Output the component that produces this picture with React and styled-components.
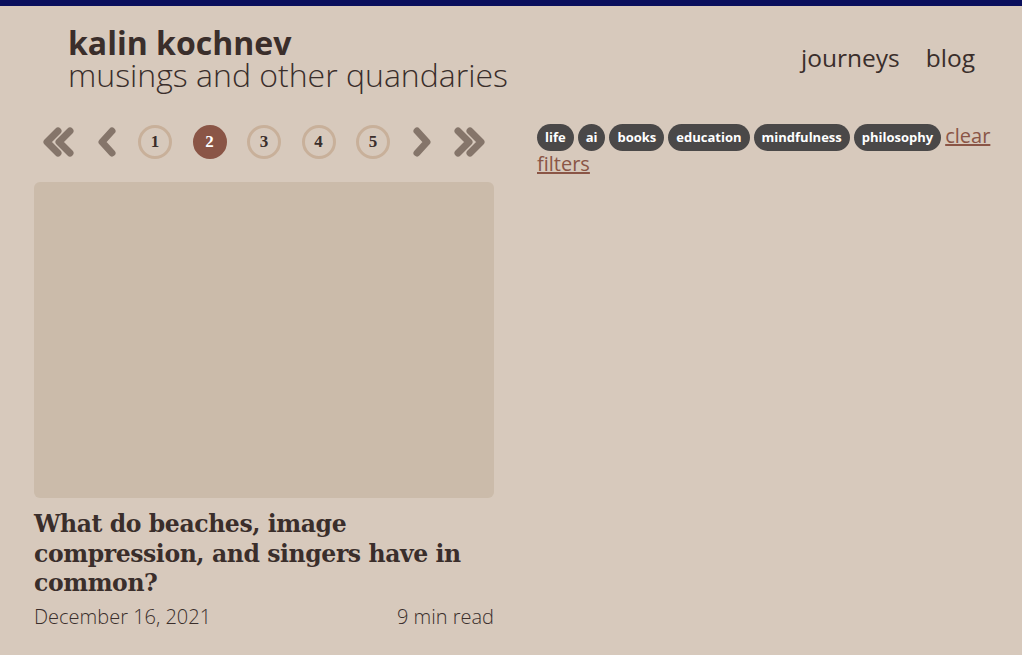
import React from 'react'
import styled, { createGlobalStyle } from 'styled-components'

const GlobalStyle = createGlobalStyle`
  html, body {
    margin: 0;
    padding: 0;
    background: #d7c9bc;
    font-family: "Open Sans", "Liberation Sans", sans-serif;
    color: #3a2e2b;
  }
`

const tags = ['life', 'ai', 'books', 'education', 'mindfulness', 'philosophy']
const pages = [1, 2, 3, 4, 5]

const Chevron = ({ double, flip }) => (
  <svg width={double ? 34 : 22} height="32" viewBox={double ? '0 0 34 32' : '0 0 22 32'}
    style={{ transform: flip ? 'scaleX(-1)' : 'none' }}>
    <g fill="none" stroke="#85756a" strokeWidth="7" strokeLinecap="round" strokeLinejoin="round">
      {double ? (
        <>
          <path d="M17 5 L6 16 L17 27" />
          <path d="M29 5 L18 16 L29 27" />
        </>
      ) : (
        <path d="M16 5 L6 16 L16 27" />
      )}
    </g>
  </svg>
)

export default function App() {
  return (
    <>
      <GlobalStyle />
      <TopBar />
      <Header>
        <Brand>
          <Name>kalin kochnev</Name>
          <Tagline>musings and other quandaries</Tagline>
        </Brand>
        <Nav>
          <NavLink>journeys</NavLink>
          <NavLink>blog</NavLink>
        </Nav>
      </Header>
      <Main>
        <LeftCol>
          <Pager>
            <Arrow><Chevron double /></Arrow>
            <Arrow><Chevron /></Arrow>
            {pages.map((p) => (
              <PageDot key={p} active={p === 2}>{p}</PageDot>
            ))}
            <Arrow><Chevron flip /></Arrow>
            <Arrow><Chevron double flip /></Arrow>
          </Pager>
          <Card>
            <Thumb />
            <Title>What do beaches, image compression, and singers have in common?</Title>
            <Meta>
              <span>December 16, 2021</span>
              <span>9 min read</span>
            </Meta>
          </Card>
        </LeftCol>
        <RightCol>
          <Filters>
            {tags.map((t) => (
              <Tag key={t}>{t}</Tag>
            ))}
            <Clear href="#">clear filters</Clear>
          </Filters>
        </RightCol>
      </Main>
    </>
  )
}

const TopBar = styled.div`
  height: 6px;
  background: #0a0f5c;
`

const Header = styled.header`
  display: flex;
  justify-content: space-between;
  align-items: center;
  padding: 20px 47px 0 68px;
`

const Brand = styled.div`
  display: flex;
  flex-direction: column;
`

const Name = styled.div`
  font-size: 32px;
  font-weight: 700;
  line-height: 34px;
`

const Tagline = styled.div`
  font-size: 32px;
  font-weight: 300;
  line-height: 30px;
`

const Nav = styled.nav`
  display: flex;
  gap: 26px;
  margin-top: -2px;
`

const NavLink = styled.a`
  font-size: 24.5px;
  font-weight: 500;
  color: #3a2e2b;
`

const Main = styled.main`
  display: flex;
  gap: 43px;
  padding: 27px 30px 0 34px;
`

const LeftCol = styled.div`
  width: 460px;
  flex-shrink: 0;
`

const Pager = styled.div`
  display: flex;
  align-items: center;
  justify-content: space-between;
  padding: 0 7px 0 7px;
  height: 50px;
`

const Arrow = styled.span`
  display: flex;
  align-items: center;
`

const PageDot = styled.span`
  width: 34px;
  height: 34px;
  box-sizing: border-box;
  border-radius: 50%;
  border: 3px solid ${(p) => (p.active ? '#8a5546' : '#c8b09a')};
  background: ${(p) => (p.active ? '#8a5546' : 'transparent')};
  color: ${(p) => (p.active ? '#fff' : '#3a2e2b')};
  display: flex;
  align-items: center;
  justify-content: center;
  font-family: "Liberation Serif", "DejaVu Serif", serif;
  font-weight: 700;
  font-size: 17px;
`

const Card = styled.article`
  margin-top: 15px;
`

const Thumb = styled.div`
  height: 316px;
  background: #cbbbaa;
  border-radius: 6px;
`

const Title = styled.h2`
  margin: 12px 0 0;
  font-family: "DejaVu Serif", "Liberation Serif", serif;
  font-size: 23.5px;
  line-height: 29.5px;
  font-weight: 700;
  letter-spacing: -0.4px;
`

const Meta = styled.div`
  display: flex;
  justify-content: space-between;
  margin-top: 4px;
  font-size: 20px;
  font-weight: 300;
`

const RightCol = styled.div`
  flex: 1;
  padding-top: 6px;
`

const Filters = styled.div`
  line-height: 27px;
`

const Tag = styled.span`
  display: inline-block;
  background: #4a4848;
  color: #fff;
  font-size: 13px;
  font-weight: 700;
  line-height: 27px;
  padding: 0 8px;
  border-radius: 13.5px;
  margin-right: 4px;
  vertical-align: middle;
`

const Clear = styled.a`
  font-size: 20px;
  color: #8a5546;
  text-decoration: underline;
  vertical-align: middle;
  position: relative;
  top: -2px;
`
